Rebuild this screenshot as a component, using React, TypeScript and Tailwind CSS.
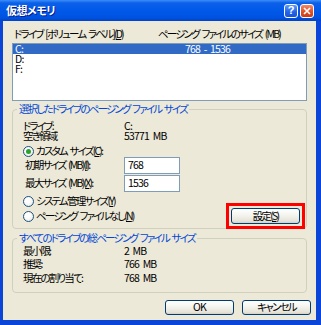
import React from "react";

function Radio({ checked }: { checked?: boolean }) {
  return (
    <span className="w-[11px] h-[11px] rounded-full border border-[#1c5180] bg-[radial-gradient(circle_at_40%_35%,#ffffff_30%,#e2e2d9_100%)] flex items-center justify-center shrink-0">
      {checked && <span className="w-[5px] h-[5px] rounded-full bg-[#2aa12a]" />}
    </span>
  );
}

function U({ children }: { children: React.ReactNode }) {
  return <span className="underline underline-offset-[1px]">{children}</span>;
}

function N({ children }: { children: React.ReactNode }) {
  return <span className="tracking-[-0.8px]">{children}</span>;
}

function XPButton({ children, className }: { children: React.ReactNode; className?: string }) {
  return (
    <div
      className={
        "rounded-[3px] border border-[#003c74] bg-[linear-gradient(to_bottom,#ffffff_0%,#f4f4ef_45%,#e6e3d8_85%,#d6d0c5_100%)] flex items-center justify-center leading-none text-black " +
        (className ?? "")
      }
    >
      {children}
    </div>
  );
}

export default function App() {
  return (
    <div className="w-[321px] h-[325px] bg-[#0a45d8] flex flex-col overflow-hidden font-['Noto_Sans_CJK_JP',sans-serif] [font-feature-settings:'palt'] text-[10.5px] tracking-[-1.8px] [word-spacing:2px] text-black">
      {/* Title bar */}
      <div className="h-[21px] shrink-0 bg-[linear-gradient(to_bottom,#3d8ef8_0%,#0b60e8_14%,#0058e8_55%,#0052e0_85%,#0043c8_100%)] flex items-center pl-[6px] pr-[7px]">
        <span className="text-white font-bold text-[11px] tracking-[-0.5px] leading-none [text-shadow:1px_1px_0_#0a1a8a]">仮想メモリ</span>
        <div className="ml-auto flex gap-[2px]">
          <div className="w-[14px] h-[14px] rounded-[3px] border border-white bg-[linear-gradient(to_bottom,#5a9bff,#2363e8_60%,#1a55d6)] flex items-center justify-center text-white font-bold text-[11px] tracking-normal leading-none font-['Liberation_Sans',sans-serif]">
            ?
          </div>
          <div className="w-[14px] h-[14px] rounded-[3px] border border-white bg-[linear-gradient(to_bottom,#f08a6a,#e0522a_55%,#c83c18)] flex items-center justify-center">
            <svg width="8" height="8" viewBox="0 0 8 8">
              <path d="M1 1 L7 7 M7 1 L1 7" stroke="white" strokeWidth="1.6" />
            </svg>
          </div>
        </div>
      </div>

      {/* Body */}
      <div className="flex-1 ml-[3px] mr-[5px] mb-[5px] bg-[#ece9d8] px-[9px] pt-[7px] flex flex-col">
        {/* header */}
        <div className="flex h-[11px] leading-[11px] pl-[2px] whitespace-nowrap">
          <span className="w-[144px]">
            ドライブ [ボリューム ラベル](<U>D</U>)
          </span>
          <span>ページング ファイルのサイズ (MB)</span>
        </div>

        {/* list */}
        <div className="mt-[4px] h-[58px] border border-[#7f9db9] bg-white">
          <div className="flex h-[10px] leading-[10px] pl-[2px] bg-[#316ac5] text-white">
            <span className="w-[170px]"><N>C:</N></span>
            <N>768 - 1536</N>
          </div>
          <div className="flex h-[10px] leading-[10px] pl-[2px]">
            <N>D:</N>
          </div>
          <div className="flex h-[10px] leading-[10px] pl-[2px]">
            <N>F:</N>
          </div>
        </div>

        {/* group 1 */}
        <fieldset className="mt-[2px] border border-[#d0d0bf] rounded-[4px] p-0 m-0 min-w-0">
          <legend className="ml-[4px] px-[2px] text-[#0046d5] leading-[12px] h-[12px] whitespace-nowrap">
            選択したドライブのページング ファイル サイズ
          </legend>
          <div className="pl-[10px] pr-[6px] pt-[6px] pb-[4px] flex flex-col">
            <div className="flex h-[10px] leading-[10px]">
              <span className="w-[101px]">ドライブ:</span>
              <N>C:</N>
            </div>
            <div className="flex h-[10px] leading-[10px]">
              <span className="w-[101px]">空き領域</span>
              <N>53771 MB</N>
            </div>
            <div className="mt-[5px] flex items-center h-[11px] gap-[2px] leading-none">
              <Radio checked />
              <span>
                カスタム サイズ(<U>C</U>):
              </span>
            </div>
            <div className="flex items-center h-[17px]">
              <span className="w-[101px] pl-[2px] leading-none">
                初期サイズ (MB)(<U>I</U>):
              </span>
              <div className="w-[56px] h-[17px] border border-[#7f9db9] bg-white flex items-center pl-[3px] leading-none">
                <N>768</N>
              </div>
            </div>
            <div className="mt-[1px] flex items-center h-[17px]">
              <span className="w-[101px] pl-[2px] leading-none">
                最大サイズ (MB)(<U>X</U>):
              </span>
              <div className="w-[56px] h-[17px] border border-[#7f9db9] bg-white flex items-center pl-[3px] leading-none">
                <N>1536</N>
              </div>
            </div>
            <div className="mt-[3px] flex items-end justify-between">
              <div className="flex flex-col gap-[3px] mb-[2px]">
                <div className="flex items-center h-[12px] gap-[2px] leading-none">
                  <Radio />
                  <span>
                    システム管理サイズ(<U>Y</U>)
                  </span>
                </div>
                <div className="flex items-center h-[12px] gap-[2px] leading-none">
                  <Radio />
                  <span>
                    ページング ファイルなし(<U>N</U>)
                  </span>
                </div>
              </div>
              <div className="outline-[3px] outline-solid outline-[#ff0000] outline-offset-[2px]">
                <XPButton className="w-[69px] h-[16px]">
                  <span>
                    設定(<U>S</U>)
                  </span>
                </XPButton>
              </div>
            </div>
          </div>
        </fieldset>

        {/* group 2 */}
        <fieldset className="mt-[3px] border border-[#d0d0bf] rounded-[4px] p-0 m-0 min-w-0">
          <legend className="ml-[4px] px-[2px] text-[#0046d5] leading-[12px] h-[12px] whitespace-nowrap">
            すべてのドライブの総ページング ファイル サイズ
          </legend>
          <div className="pl-[10px] pr-[6px] pt-[1px] pb-[7px] flex flex-col">
            <div className="flex items-center h-[13px] leading-none">
              <span className="w-[101px]">最小限:</span>
              <N>2 MB</N>
            </div>
            <div className="flex items-center h-[13px] leading-none">
              <span className="w-[101px]">推奨:</span>
              <N>766 MB</N>
            </div>
            <div className="flex items-center h-[14px] leading-none">
              <span className="w-[101px]">現在の割り当て:</span>
              <N>768 MB</N>
            </div>
          </div>
        </fieldset>

        {/* buttons */}
        <div className="mt-[7px] flex justify-end gap-[8px] mr-[-4px]">
          <XPButton className="w-[69px] h-[15px]"><N>OK</N></XPButton>
          <XPButton className="w-[69px] h-[15px]">キャンセル</XPButton>
        </div>
      </div>
    </div>
  );
}
